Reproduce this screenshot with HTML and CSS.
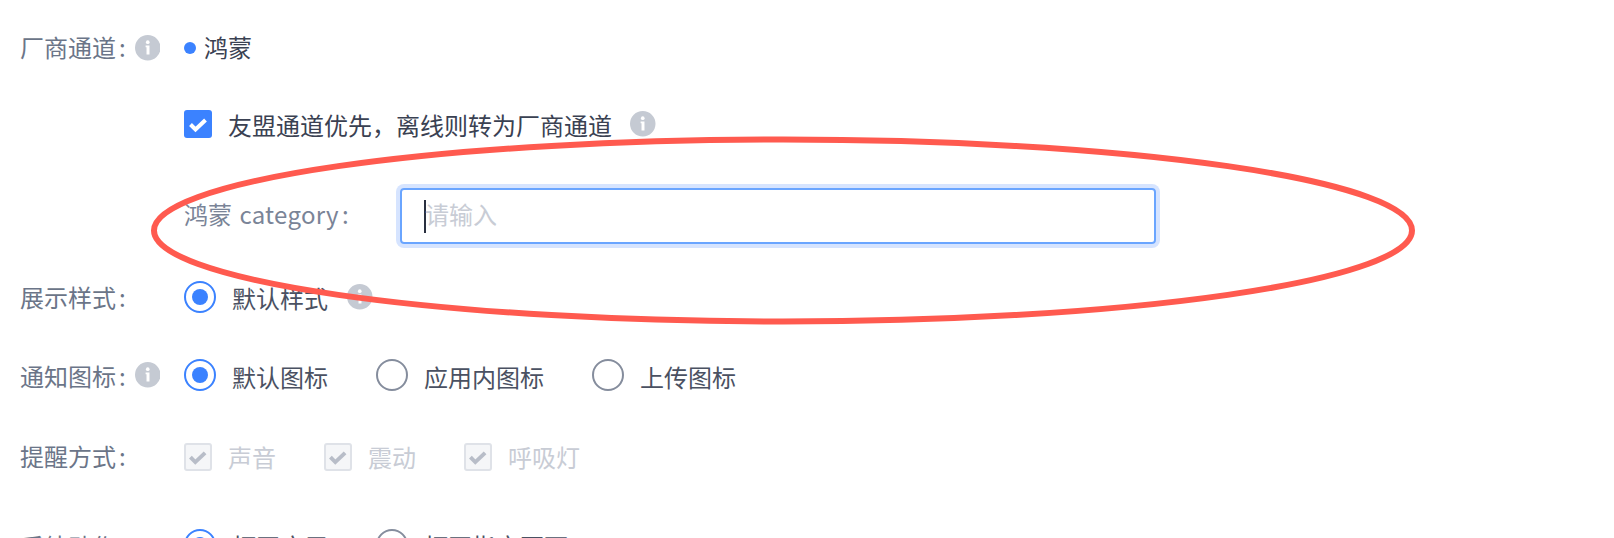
FILE: index.html
```html
<!DOCTYPE html>
<html lang="zh">
<head>
<meta charset="utf-8">
<title>通知设置</title>
<link rel="stylesheet" href="styles.css">
</head>
<body>
<form class="form">
  <div class="row row-vendor">
    <div class="label"><span class="lift-2">厂商通道<span class="colon">:</span></span><svg class="info" viewBox="0 0 25 25"><circle cx="12.5" cy="12.5" r="12.5" fill="#c5cad3"/><circle cx="12.5" cy="7" r="1.8" fill="#fff"/><path d="M10.4 10.4h3.8v8.6h-2.9v-6.9h-.9z" fill="#fff"/></svg></div>
    <div class="content"><span class="dot"></span><span class="strong lift-2">鸿蒙</span></div>
  </div>
  <div class="row row-prefer">
    <div class="label"></div>
    <div class="content">
      <span class="check on"><svg viewBox="0 0 28 28"><path d="M6.5 14.5l5 5 10-9.5" fill="none" stroke="#fff" stroke-width="4"/></svg></span>
      <span class="strong after-check">友盟通道优先&#65292;离线则转为厂商通道</span>
      <svg class="info info-gap" viewBox="0 0 25 25"><circle cx="12.5" cy="12.5" r="12.5" fill="#c5cad3"/><circle cx="12.5" cy="7" r="1.8" fill="#fff"/><path d="M10.4 10.4h3.8v8.6h-2.9v-6.9h-.9z" fill="#fff"/></svg>
    </div>
  </div>
  <div class="row row-category">
    <div class="label"></div>
    <div class="content">
      <span class="sub-label lift-3">鸿蒙 <span class="latin">category</span><span class="colon">:</span></span>
      <div class="input"><span class="caret"></span><span class="placeholder lift-3">请输入</span></div>
    </div>
  </div>
  <div class="row row-style">
    <div class="label"><span class="lift-1">展示样式<span class="colon">:</span></span></div>
    <div class="content">
      <span class="radio on"></span><span class="opt">默认样式</span>
      <svg class="info info-gap2" viewBox="0 0 25 25"><circle cx="12.5" cy="12.5" r="12.5" fill="#c5cad3"/><circle cx="12.5" cy="7" r="1.8" fill="#fff"/><path d="M10.4 10.4h3.8v8.6h-2.9v-6.9h-.9z" fill="#fff"/></svg>
    </div>
  </div>
  <div class="row row-icon">
    <div class="label"><span>通知图标<span class="colon">:</span></span><svg class="info" viewBox="0 0 25 25"><circle cx="12.5" cy="12.5" r="12.5" fill="#c5cad3"/><circle cx="12.5" cy="7" r="1.8" fill="#fff"/><path d="M10.4 10.4h3.8v8.6h-2.9v-6.9h-.9z" fill="#fff"/></svg></div>
    <div class="content options">
      <label class="item"><span class="radio on"></span><span class="opt drop-1">默认图标</span></label>
      <label class="item"><span class="radio"></span><span class="opt drop-1">应用内图标</span></label>
      <label class="item"><span class="radio"></span><span class="opt drop-1">上传图标</span></label>
    </div>
  </div>
  <div class="row row-remind">
    <div class="label"><span class="lift-2">提醒方式<span class="colon">:</span></span></div>
    <div class="content options">
      <label class="item"><span class="check off"><svg viewBox="0 0 24 24"><path d="M4.5 12.5l5 5 10-9.5" fill="none" stroke="#b8bdc8" stroke-width="4"/></svg></span><span class="muted lift-1">声音</span></label>
      <label class="item"><span class="check off"><svg viewBox="0 0 24 24"><path d="M4.5 12.5l5 5 10-9.5" fill="none" stroke="#b8bdc8" stroke-width="4"/></svg></span><span class="muted lift-1">震动</span></label>
      <label class="item"><span class="check off"><svg viewBox="0 0 24 24"><path d="M4.5 12.5l5 5 10-9.5" fill="none" stroke="#b8bdc8" stroke-width="4"/></svg></span><span class="muted lift-1">呼吸灯</span></label>
    </div>
  </div>
  <div class="row row-after">
    <div class="label"><span>后续动作<span class="colon">:</span></span></div>
    <div class="content options">
      <label class="item"><span class="radio on"></span><span class="opt">打开应用</span></label>
      <label class="item"><span class="radio"></span><span class="opt">打开指定页面</span></label>
    </div>
  </div>
</form>
<svg class="annotation" viewBox="0 0 1614 538"><ellipse cx="783" cy="230.5" rx="629" ry="91" fill="none" stroke="#ff5a4f" stroke-width="6"/></svg>
</body>
</html>
```
FILE: styles.css
```css
* { box-sizing: border-box; }
html, body { height: 100%; }
body {
  margin: 0;
  background: #fff;
  overflow: hidden;
  position: relative;
  font-family: "Noto Sans CJK SC", "Noto Sans", sans-serif;
  font-size: 24px;
  color: #6b7588;
}
.form { display: flex; flex-direction: column; padding-left: 20px; }
.row { display: flex; align-items: center; height: 40px; flex: none; }
.row-vendor { margin-top: 28px; }
.row-prefer { margin-top: 36px; }
.row-category { margin-top: 44px; height: 56px; }
.row-style { margin-top: 33px; }
.row-icon { margin-top: 38px; }
.row-remind { margin-top: 42px; }
.row-after { margin-top: 48px; }
.label { width: 164px; display: flex; align-items: center; flex: none; }
.colon { margin-left: 3px; }
.lift-1 { padding-bottom: 2px; }
.lift-2 { padding-bottom: 4px; }
.lift-3 { padding-bottom: 6px; }
.drop-1 { padding-top: 2px; }
.latin { letter-spacing: 0.3px; margin-left: 2px; }
.info { width: 25.5px; height: 25.5px; flex: none; }
.label .info { margin-left: 9px; }
.content { display: flex; align-items: center; }
.dot { width: 12px; height: 12px; border-radius: 50%; background: #3b82ff; margin-right: 8px; }
.strong { color: #3a4152; }
.after-check { margin-left: 16px; }
.info-gap { margin-left: 18px; }
.info-gap2 { margin-left: 19px; }
.check { width: 28px; height: 28px; border-radius: 3px; display: block; flex: none; }
.check svg { display: block; width: 100%; height: 100%; }
.check.on { background: #3b82ff; }
.check.off { width: 27.5px; height: 27.5px; background: #f5f6f8; border: 2px solid #dfe2e8; }
.sub-label { width: 216px; color: #7a8497; }
.input {
  width: 756px;
  height: 56px;
  border: 2px solid #6aa5ff;
  border-radius: 4px;
  box-shadow: 0 0 0 4px #d6e4ff;
  display: flex;
  align-items: center;
  padding-left: 22px;
}
.caret { width: 2px; height: 33px; margin-right: -1px; background: #2a3040; }
.placeholder { color: #c8ccd5; }
.radio {
  width: 32px;
  height: 32px;
  border-radius: 50%;
  border: 2px solid #858d9d;
  background: #fff;
  display: block;
  flex: none;
  position: relative;
}
.radio.on { border-color: #3b82ff; }
.radio.on::after {
  content: "";
  position: absolute;
  inset: 6px;
  border-radius: 50%;
  background: #3b82ff;
}
.opt { margin-left: 16px; color: #4a5162; }
.options { gap: 48px; }
.item { display: flex; align-items: center; }
.muted { margin-left: 16.5px; color: #c8ccd5; }
.annotation { position: absolute; left: 0; top: 0; width: 1614px; height: 538px; pointer-events: none; }
```
